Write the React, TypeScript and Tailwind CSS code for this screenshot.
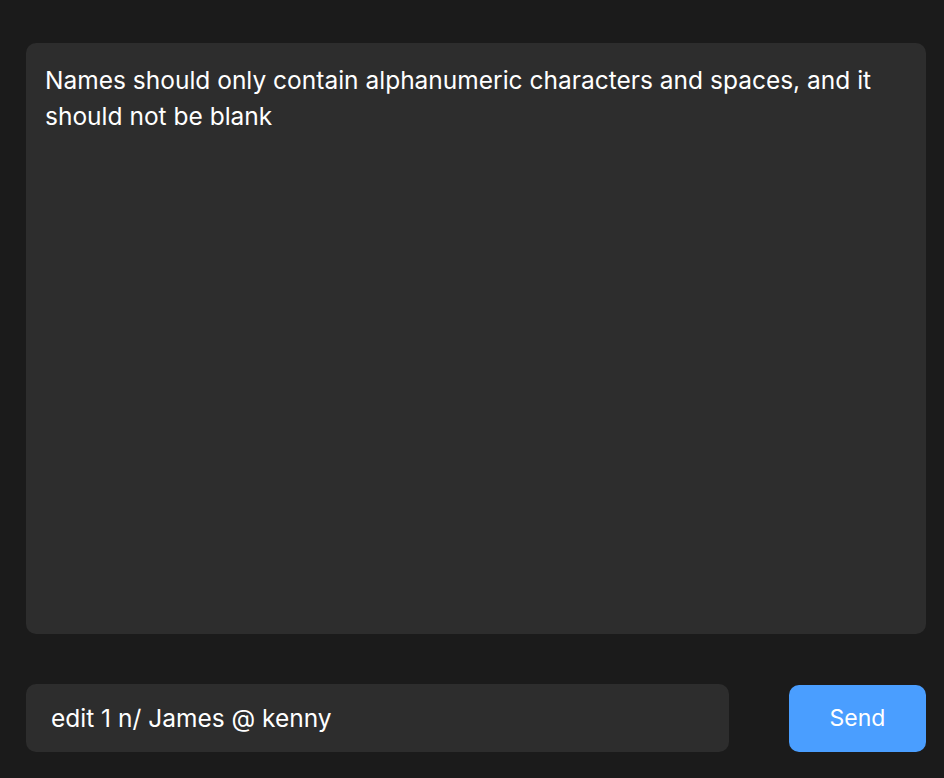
export default function App() {
  return (
    <div
      className="h-[778px] w-[944px] bg-[#1b1b1b] pl-[26px] pr-[18px] pt-[43px] flex flex-col"
      style={{ fontFamily: "Inter, 'Noto Sans', sans-serif" }}
    >
      <div className="h-[591px] rounded-[10px] bg-[#2d2d2d] px-[19px] pt-[19px] text-[24.5px] leading-[36px] text-white">
        Names should only contain alphanumeric characters and spaces, and it should not be blank
      </div>
      <div className="mt-[50px] flex items-center gap-[60px]">
        <div className="flex h-[68px] w-[703px] items-center rounded-[10px] bg-[#2d2d2d] px-[25px] text-[24.5px] text-white">
          edit 1 n/ James @ kenny
        </div>
        <button className="h-[67px] w-[137px] rounded-[10px] bg-[#4a9eff] text-[23px] text-white">
          Send
        </button>
      </div>
    </div>
  );
}
